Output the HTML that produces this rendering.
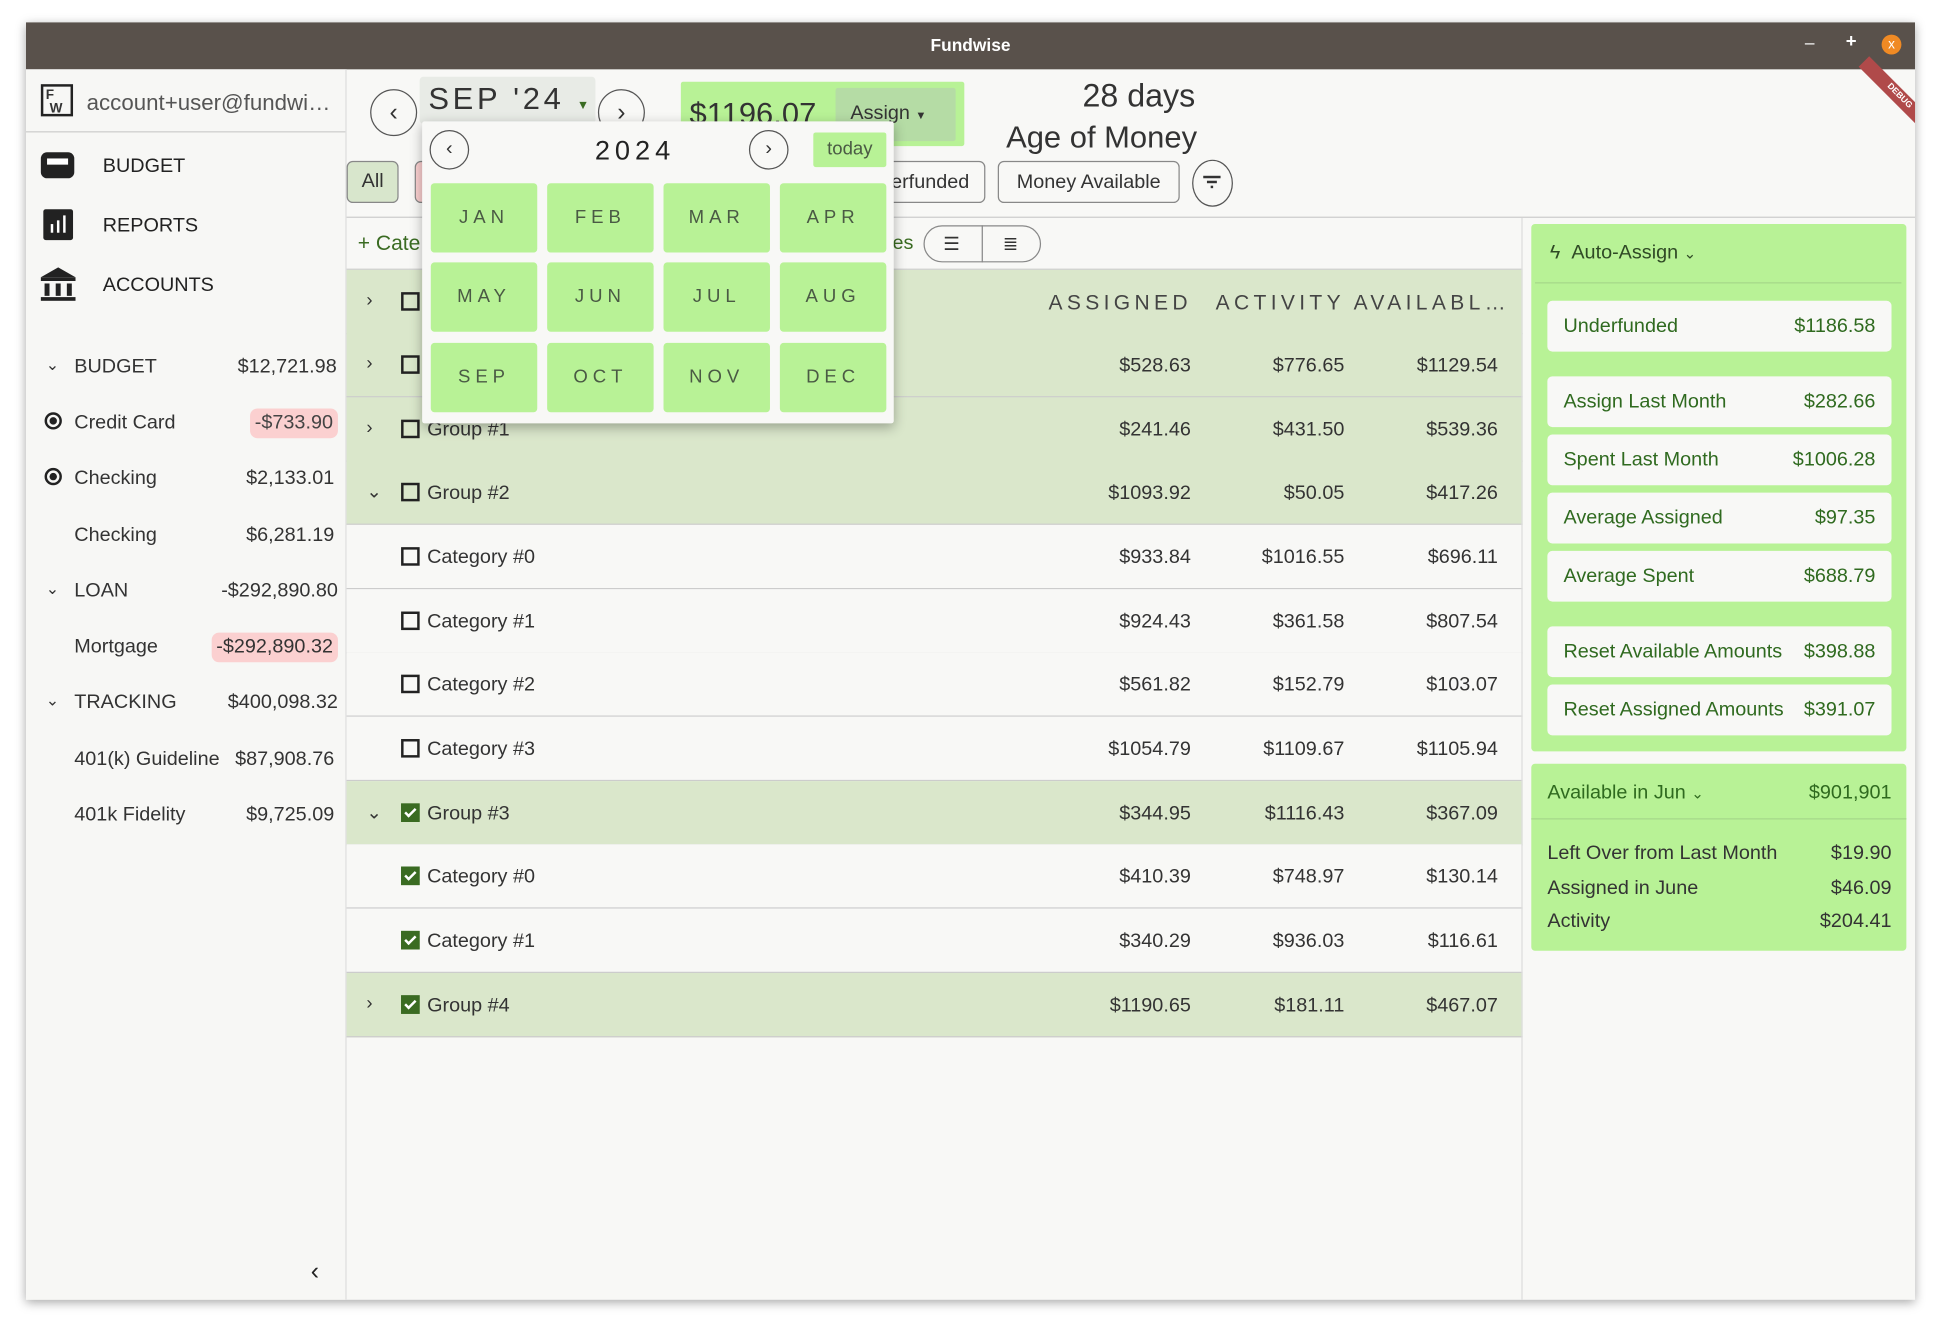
<!DOCTYPE html>
<html><head><meta charset="utf-8"><style>
html,body{margin:0;padding:0;background:#fff;width:1941px;height:1330px;overflow:hidden}
#s{position:absolute;left:0;top:0;width:1568px;height:1074px;transform:scale(1.2379);transform-origin:0 0;font-family:"Liberation Sans",sans-serif;color:#333}
.a{position:absolute}
.win{left:21px;top:18px;width:1526px;height:1032px;background:#f8f8f6;box-shadow:0 2px 8px rgba(0,0,0,.35);overflow:hidden}
.tb{left:0;top:0;width:1526px;height:38px;background:#59514b}
.r{text-align:right}
.nav{font-size:16px;color:#222}
.acc{font-size:16px;color:#333}
.pill{background:#fbd0d0;border-radius:6px;padding:3px 4px}
.circ{border:1px solid #555;border-radius:50%;box-sizing:border-box;text-align:center}
.row{position:absolute;left:259px;width:950px;height:51px;border-bottom:1px solid #ccc;font-size:16px}
.g{background:#dae7cb}
.c{background:#f8f8f6}
.row .n{position:absolute;left:65px;top:18px}
.row .v1,.row .v2,.row .v3{position:absolute;top:18px;text-align:right;width:110px}
.v1{left:572px}.v2{left:696px}.v3{left:820px}
.cb{position:absolute;left:44px;top:18px;width:11px;height:11px;border:2px solid #222}
.cb.on{background:#3a6b22;border-color:#3a6b22}
.cb.on:after{content:"";position:absolute;left:3px;top:0px;width:3px;height:7px;border:solid #fff;border-width:0 2px 2px 0;transform:rotate(45deg)}
.chev{position:absolute;left:16px;top:16px;font-size:15px}
.m{position:absolute;width:86px;height:56px;background:#b8f296;border-radius:3px;text-align:center;line-height:56px;letter-spacing:4px;font-size:15px;color:#4a5a44}
.item{position:absolute;left:13px;width:278px;height:41px;background:#f8f8f6;border-radius:4px;color:#2f6a1f;font-size:16px}
.item span{position:absolute;top:12px}
.item .l{left:13px}.item .rr{right:13px}
</style></head><body><div id="s">
<div class="a win">
 <div class="a tb"></div>
 <div class="a" style="left:0;top:10px;width:1526px;text-align:center;color:#fff;font-weight:bold;font-size:14px">Fundwise</div>
 <div class="a" style="left:1437px;top:8px;color:#fff;font-size:14px">–</div>
 <div class="a" style="left:1470px;top:7px;color:#fff;font-size:15px;font-weight:bold">+</div>
 <div class="a" style="left:1499px;top:10px;width:16px;height:16px;border-radius:50%;background:#f08a24;color:#fff;font-size:11px;text-align:center;line-height:16px">x</div>

 <!-- sidebar -->
 <div class="a" style="left:0;top:38px;width:258px;height:994px;background:#f7f7f5;border-right:1px solid #ddd"></div>
 <div class="a" style="left:12px;top:50px;width:26px;height:26px;border:2px solid #222;font-size:11px;font-weight:bold;line-height:11px;box-sizing:border-box;padding:2px">F<br>&nbsp;W</div>
 <div class="a" style="left:49px;top:55px;font-size:18px;color:#555">account+user@fundwi…</div>
 <div class="a" style="left:0;top:88px;width:258px;border-top:1px solid #ccc"></div>
 <div class="a" style="left:12px;top:105px;width:27px;height:21px;background:#222;border-radius:5px"></div>
 <div class="a" style="left:17px;top:110px;width:17px;height:5px;background:#fff"></div>
 <div class="a nav" style="left:62px;top:108px">BUDGET</div>
 <div class="a" style="left:14px;top:151px;width:24px;height:25px;background:#222;border-radius:2px"></div>
 <div class="a" style="left:20px;top:163px;width:2px;height:7px;background:#fff"></div><div class="a" style="left:25px;top:160px;width:2px;height:10px;background:#fff"></div><div class="a" style="left:30px;top:156px;width:2px;height:14px;background:#fff"></div>
 <div class="a nav" style="left:62px;top:156px">REPORTS</div>
 <div class="a" style="left:12px;top:198px;width:0;height:0;border-left:14px solid transparent;border-right:14px solid transparent;border-bottom:8px solid #222"></div>
 <div class="a" style="left:12px;top:206px;width:28px;height:3px;background:#222"></div>
 <div class="a" style="left:15px;top:211px;width:4px;height:10px;background:#222"></div><div class="a" style="left:24px;top:211px;width:4px;height:10px;background:#222"></div><div class="a" style="left:33px;top:211px;width:4px;height:10px;background:#222"></div>
 <div class="a" style="left:12px;top:222px;width:28px;height:3px;background:#222"></div>
 <div class="a nav" style="left:62px;top:204px">ACCOUNTS</div>

 <div class="a acc" style="left:16px;top:269px;font-size:13px">⌄</div>
 <div class="a acc" style="left:39px;top:270px">BUDGET</div><div class="a acc r" style="right:1275px;top:270px">$12,721.98</div>
 <div class="a" style="left:15px;top:315px;width:14px;height:14px;border:2px solid #222;border-radius:50%;box-sizing:border-box"></div><div class="a" style="left:19px;top:319px;width:6px;height:6px;border-radius:50%;background:#222"></div>
 <div class="a acc" style="left:39px;top:315px">Credit Card</div><div class="a acc r pill" style="right:1274px;top:312px;color:#444">-$733.90</div>
 <div class="a" style="left:15px;top:360px;width:14px;height:14px;border:2px solid #222;border-radius:50%;box-sizing:border-box"></div><div class="a" style="left:19px;top:364px;width:6px;height:6px;border-radius:50%;background:#222"></div>
 <div class="a acc" style="left:39px;top:360px">Checking</div><div class="a acc r" style="right:1277px;top:360px">$2,133.01</div>
 <div class="a acc" style="left:39px;top:406px">Checking</div><div class="a acc r" style="right:1277px;top:406px">$6,281.19</div>
 <div class="a acc" style="left:16px;top:450px;font-size:13px">⌄</div>
 <div class="a acc" style="left:39px;top:451px">LOAN</div><div class="a acc r" style="right:1274px;top:451px">-$292,890.80</div>
 <div class="a acc" style="left:39px;top:496px">Mortgage</div><div class="a acc r pill" style="right:1274px;top:493px">-$292,890.32</div>
 <div class="a acc" style="left:16px;top:540px;font-size:13px">⌄</div>
 <div class="a acc" style="left:39px;top:541px">TRACKING</div><div class="a acc r" style="right:1274px;top:541px">$400,098.32</div>
 <div class="a acc" style="left:39px;top:587px">401(k) Guideline</div><div class="a acc r" style="right:1277px;top:587px">$87,908.76</div>
 <div class="a acc" style="left:39px;top:632px">401k Fidelity</div><div class="a acc r" style="right:1277px;top:632px">$9,725.09</div>
 <div class="a" style="left:230px;top:998px;font-size:20px;color:#222">‹</div>

 <!-- top main -->
 <div class="a circ" style="left:278px;top:54px;width:38px;height:38px;line-height:36px;font-size:20px">‹</div>
 <div class="a" style="left:318px;top:44px;width:142px;height:38px;background:#e8ebe6;border-radius:3px"></div>
 <div class="a" style="left:325px;top:48px;font-size:25px;letter-spacing:3px;color:#333">SEP '24 <span style="font-size:10px;color:#3a6b22">▼</span></div>
 <div class="a circ" style="left:462px;top:54px;width:38px;height:38px;line-height:36px;font-size:20px">›</div>
 <div class="a" style="left:529px;top:48px;width:229px;height:52px;background:#b8f296;border-radius:2px"></div>
 <div class="a" style="left:536px;top:60px;font-size:25px;color:#333">$1196.07</div>
 <div class="a" style="left:654px;top:53px;width:97px;height:43px;background:#b5dca5;border-radius:2px"></div>
 <div class="a" style="left:666px;top:65px;font-size:16px">Assign <span style="font-size:9px">▼</span></div>
 <div class="a" style="left:834px;top:44px;width:130px;text-align:center;font-size:26px;color:#333">28 days</div>
 <div class="a" style="left:770px;top:79px;width:176px;text-align:right;font-size:25px;color:#333">Age of Money</div>

 <div class="a" style="left:259px;top:112px;width:42px;height:34px;background:#d8e6cc;border:1px solid #888;border-radius:5px;box-sizing:border-box;text-align:center;line-height:32px;font-size:16px">All</div>
 <div class="a" style="left:314px;top:112px;width:20px;height:34px;background:#fbd0d0;border:1px solid #888;border-radius:5px;box-sizing:border-box"></div>
 <div class="a" style="left:690px;top:112px;width:85px;height:34px;border:1px solid #888;border-radius:5px;box-sizing:border-box;font-size:16px;line-height:34px;text-align:right;padding-right:12px">erfunded</div>
 <div class="a" style="left:785px;top:112px;width:147px;height:34px;border:1px solid #888;border-radius:5px;box-sizing:border-box;font-size:16px;line-height:34px;text-align:center">Money Available</div>
 <div class="a circ" style="left:942px;top:111px;width:33px;height:38px"></div>
 <div class="a" style="left:951px;top:124px;width:14px;height:2px;background:#333"></div><div class="a" style="left:954px;top:128px;width:8px;height:2px;background:#333"></div><div class="a" style="left:957px;top:132px;width:2px;height:2px;background:#333"></div>
 <div class="a" style="left:259px;top:157px;width:1267px;border-top:1px solid #ccc"></div>

 <div class="a" style="left:268px;top:169px;font-size:17px;color:#3a6b22">+ Cate</div>
 <div class="a" style="left:700px;top:170px;font-size:16px;color:#3a6b22">es</div>
 <div class="a" style="left:725px;top:164px;width:95px;height:30px;border:1px solid #888;border-radius:15px;box-sizing:border-box"></div>
 <div class="a" style="left:772px;top:164px;height:30px;border-left:1px solid #888"></div>
 <div class="a" style="left:741px;top:170px;font-size:15px">☰</div><div class="a" style="left:789px;top:170px;font-size:15px">≣</div>
 <div class="a" style="left:259px;top:199px;width:950px;border-top:1px solid #ccc"></div>

 <!-- table -->
 <div class="row g" style="top:200px"><span class="chev">›</span><span class="cb"></span>
  <span class="a" style="left:567px;top:17px;font-size:17px;letter-spacing:3.5px;color:#444">ASSIGNED</span>
  <span class="a" style="left:702px;top:17px;font-size:17px;letter-spacing:3.5px;color:#444">ACTIVITY AVAILABL…</span></div>
 <div class="row g" style="top:251px"><span class="chev">›</span><span class="cb"></span><span class="v1">$528.63</span><span class="v2">$776.65</span><span class="v3">$1129.54</span></div>
 <div class="row g" style="top:303px"><span class="chev">›</span><span class="cb"></span><span class="n">Group #1</span><span class="v1">$241.46</span><span class="v2">$431.50</span><span class="v3">$539.36</span></div>
 <div class="row g" style="top:354px"><span class="chev">⌄</span><span class="cb"></span><span class="n">Group #2</span><span class="v1">$1093.92</span><span class="v2">$50.05</span><span class="v3">$417.26</span></div>
 <div class="row c" style="top:406px"><span class="cb"></span><span class="n">Category #0</span><span class="v1">$933.84</span><span class="v2">$1016.55</span><span class="v3">$696.11</span></div>
 <div class="row c" style="top:458px"><span class="cb"></span><span class="n">Category #1</span><span class="v1">$924.43</span><span class="v2">$361.58</span><span class="v3">$807.54</span></div>
 <div class="row c" style="top:509px"><span class="cb"></span><span class="n">Category #2</span><span class="v1">$561.82</span><span class="v2">$152.79</span><span class="v3">$103.07</span></div>
 <div class="row c" style="top:561px"><span class="cb"></span><span class="n">Category #3</span><span class="v1">$1054.79</span><span class="v2">$1109.67</span><span class="v3">$1105.94</span></div>
 <div class="row g" style="top:613px"><span class="chev">⌄</span><span class="cb on"></span><span class="n">Group #3</span><span class="v1">$344.95</span><span class="v2">$1116.43</span><span class="v3">$367.09</span></div>
 <div class="row c" style="top:664px"><span class="cb on"></span><span class="n">Category #0</span><span class="v1">$410.39</span><span class="v2">$748.97</span><span class="v3">$130.14</span></div>
 <div class="row c" style="top:716px"><span class="cb on"></span><span class="n">Category #1</span><span class="v1">$340.29</span><span class="v2">$936.03</span><span class="v3">$116.61</span></div>
 <div class="row g" style="top:768px"><span class="chev">›</span><span class="cb on"></span><span class="n">Group #4</span><span class="v1">$1190.65</span><span class="v2">$181.11</span><span class="v3">$467.07</span></div>
 <div class="a" style="left:1208px;top:158px;height:874px;border-left:1px solid #ddd"></div>

 <!-- right panel -->
 <div class="a" style="left:1216px;top:163px;width:303px;height:426px;background:#b8f296;border-radius:3px">
  <div class="a" style="left:15px;top:15px;font-size:16px;color:#2f4a25">ϟ&nbsp; Auto-Assign <span style="font-size:12px">⌄</span></div>
  <div class="a" style="left:3px;top:47px;width:296px;border-top:1px solid #a6d88a"></div>
  <div class="item" style="top:62px"><span class="l">Underfunded</span><span class="rr">$1186.58</span></div>
  <div class="item" style="top:123px"><span class="l">Assign Last Month</span><span class="rr">$282.66</span></div>
  <div class="item" style="top:170px"><span class="l">Spent Last Month</span><span class="rr">$1006.28</span></div>
  <div class="item" style="top:217px"><span class="l">Average Assigned</span><span class="rr">$97.35</span></div>
  <div class="item" style="top:264px"><span class="l">Average Spent</span><span class="rr">$688.79</span></div>
  <div class="item" style="top:325px"><span class="l">Reset Available Amounts</span><span class="rr">$398.88</span></div>
  <div class="item" style="top:372px"><span class="l">Reset Assigned Amounts</span><span class="rr">$391.07</span></div>
 </div>
 <div class="a" style="left:1216px;top:599px;width:303px;height:151px;background:#b8f296;border-radius:3px;font-size:16px;color:#333">
  <div class="a" style="left:13px;top:15px;color:#2f6a1f">Available in Jun <span style="font-size:12px">⌄</span></div><div class="a" style="right:12px;top:15px;color:#2f6a1f">$901,901</div>
  <div class="a" style="left:0;top:44px;width:303px;border-top:1px solid #a6d88a"></div>
  <div class="a" style="left:13px;top:64px">Left Over from Last Month</div><div class="a" style="right:12px;top:64px">$19.90</div>
  <div class="a" style="left:13px;top:92px">Assigned in June</div><div class="a" style="right:12px;top:92px">$46.09</div>
  <div class="a" style="left:13px;top:119px">Activity</div><div class="a" style="right:12px;top:119px">$204.41</div>
 </div>
 <div class="a" style="left:1473px;top:54px;width:80px;height:12px;background:#b04a4a;transform:rotate(45deg);color:#fff;font-size:7px;font-weight:bold;text-align:center;line-height:12px">DEBUG</div>

 <!-- popup -->
 <div class="a" style="left:320px;top:80px;width:381px;height:244px;background:#f8f8f6;box-shadow:0 3px 10px rgba(0,0,0,.3);border-radius:2px">
  <div class="a circ" style="left:6px;top:7px;width:32px;height:32px;line-height:29px;font-size:16px">‹</div>
  <div class="a" style="left:0;top:11px;width:344px;text-align:center;font-size:22px;letter-spacing:4px;color:#222">2024</div>
  <div class="a circ" style="left:264px;top:7px;width:32px;height:32px;line-height:29px;font-size:16px">›</div>
  <div class="a" style="left:316px;top:9px;width:59px;height:28px;background:#b8f296;border-radius:2px;text-align:center;line-height:28px;font-size:15px;color:#4a5a44">today</div>
  <div class="m" style="left:7px;top:50px">JAN</div><div class="m" style="left:101px;top:50px">FEB</div><div class="m" style="left:195px;top:50px">MAR</div><div class="m" style="left:289px;top:50px">APR</div>
  <div class="m" style="left:7px;top:114px">MAY</div><div class="m" style="left:101px;top:114px">JUN</div><div class="m" style="left:195px;top:114px">JUL</div><div class="m" style="left:289px;top:114px">AUG</div>
  <div class="m" style="left:7px;top:179px">SEP</div><div class="m" style="left:101px;top:179px">OCT</div><div class="m" style="left:195px;top:179px">NOV</div><div class="m" style="left:289px;top:179px">DEC</div>
 </div>
</div>
</div></body></html>
